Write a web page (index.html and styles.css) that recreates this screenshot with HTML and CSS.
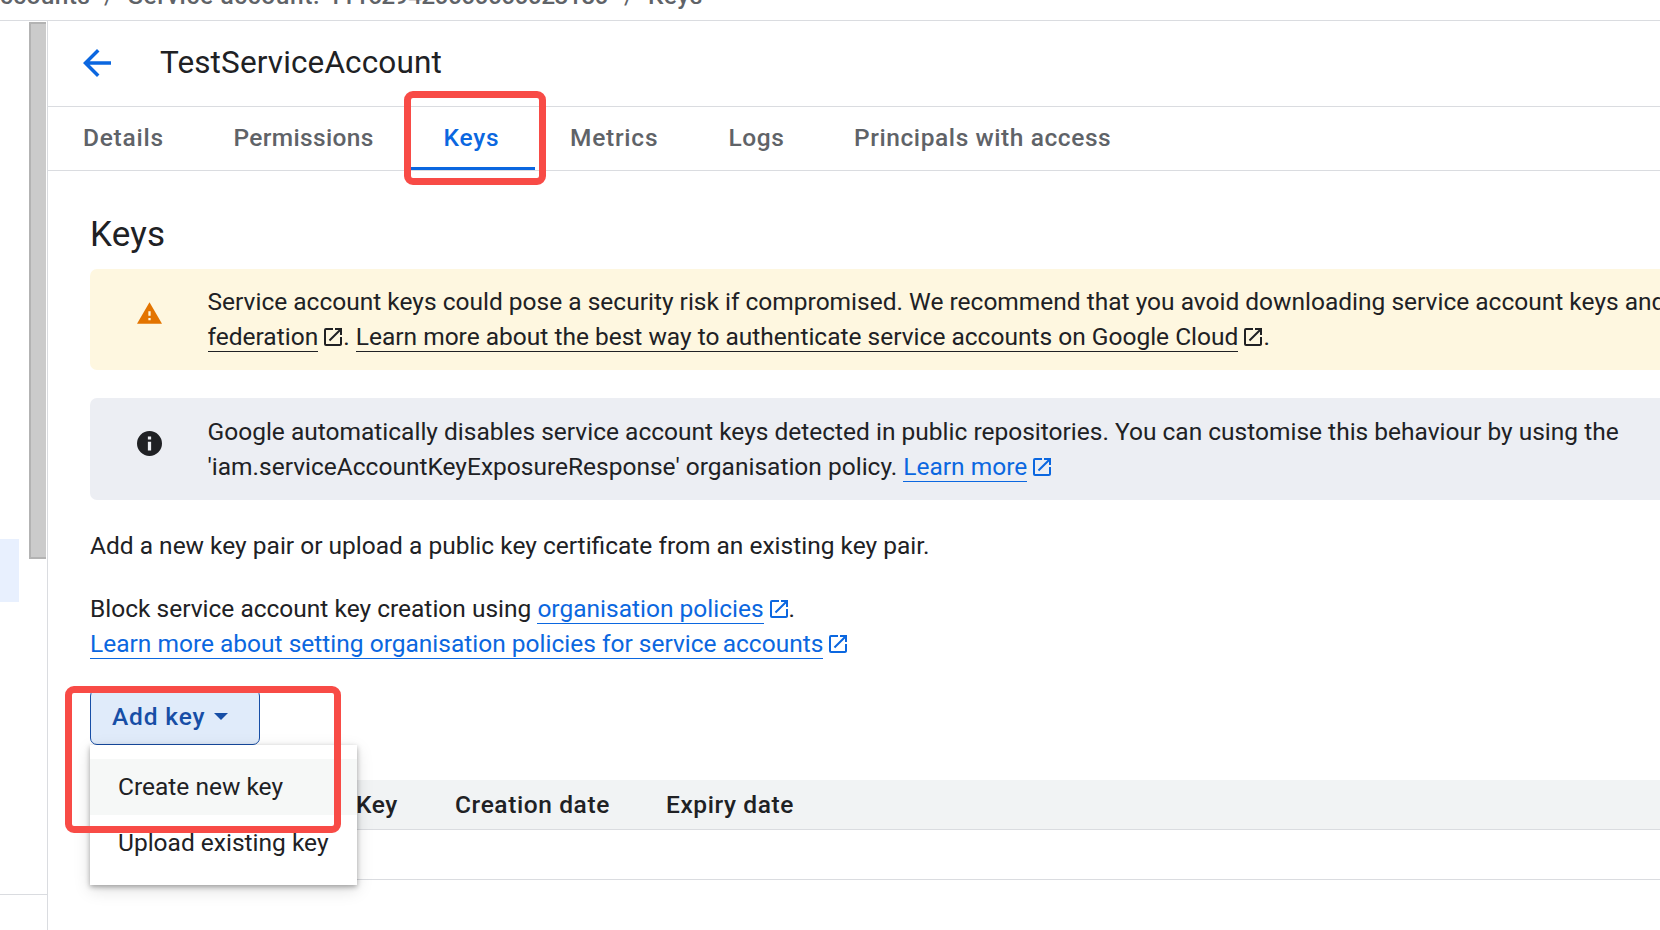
FILE: index.html
```html
<!DOCTYPE html>
<html lang="en">
<head>
<meta charset="utf-8">
<title>TestServiceAccount – Keys</title>
<link rel="stylesheet" href="styles.css">
</head>
<body>
<svg class="defs" aria-hidden="true">
  <symbol id="external" viewBox="3 3 18 18"><path d="M19 19H5V5h7V3H5a2 2 0 0 0-2 2v14a2 2 0 0 0 2 2h14c1.1 0 2-.9 2-2v-7h-2v7zM14 3v2h3.59l-9.83 9.83 1.41 1.41L19 6.41V10h2V3h-7z"/></symbol>
</svg>
<div class="page">
  <nav class="breadcrumb">
    <span class="crumb-parent">ccounts</span><span class="slash">/</span>
    <span class="crumb-account">Service account:</span><span class="crumb-id">111629420000000023180</span><span class="slash slash-last">/</span><span class="crumb-keys">Keys</span>
  </nav>
  <div class="body">
    <aside class="sidebar">
      <div class="side-list">
        <div class="side-selected"></div>
      </div>
      <div class="scroll-thumb"></div>
    </aside>
    <main class="main">
      <header class="title-bar">
        <svg class="back" viewBox="4 4 16 16"><path d="M20 11H7.83l5.59-5.59L12 4l-8 8 8 8 1.41-1.41L7.83 13H20v-2z"/></svg>
        <h1>TestServiceAccount</h1>
      </header>
      <div class="tabs">
        <a class="tab tab-details">Details</a>
        <a class="tab tab-permissions">Permissions</a>
        <a class="tab tab-keys active">Keys<span class="mark mark-tab"></span></a>
        <a class="tab tab-metrics">Metrics</a>
        <a class="tab tab-logs">Logs</a>
        <a class="tab tab-principals">Principals with access</a>
      </div>
      <section class="content">
        <h2>Keys</h2>
        <div class="banner warning">
          <svg class="status" viewBox="1 1 22 22"><path d="M1 21h22L12 2 1 21zm12-3h-2v-2h2v2zm0-4h-2v-4h2v4z"/></svg>
          <p>Service account keys could pose a security risk if compromised. We recommend that you avoid downloading service account keys and<br><a>federation</a><svg class="ext"><use href="#external"/></svg>. <a>Learn more about the best way to authenticate service accounts on Google Cloud</a><svg class="ext"><use href="#external"/></svg>.</p>
        </div>
        <div class="banner info">
          <svg class="status" viewBox="2 2 20 20"><path d="M12 2a10 10 0 1 0 0 20 10 10 0 0 0 0-20zm1.3 15.5h-2.6v-6.9h2.6v6.9zm0-8.7h-2.6V6.4h2.6v2.4z"/></svg>
          <p>Google automatically disables service account keys detected in public repositories. You can customise this behaviour by using the<br>'iam.serviceAccountKeyExposureResponse' organisation policy. <a class="link">Learn more</a><svg class="ext link"><use href="#external"/></svg></p>
        </div>
        <p class="intro">Add a new key pair or upload a public key certificate from an existing key pair.</p>
        <p class="policy">Block service account key creation using <a class="link">organisation policies</a><svg class="ext link"><use href="#external"/></svg>.<br><a class="link">Learn more about setting organisation policies for service accounts</a><svg class="ext link"><use href="#external"/></svg></p>
        <div class="add-key">
          <button class="add-button">Add key<span class="caret"></span></button>
          <div class="menu">
            <div class="menu-item hover">Create new key</div>
            <div class="menu-item">Upload existing key</div>
          </div>
          <span class="mark mark-add"></span>
        </div>
        <div class="table">
          <div class="row head"><span class="col-key">Key</span><span class="col-created">Creation date</span><span>Expiry date</span></div>
          <div class="row"></div>
        </div>
      </section>
    </main>
  </div>
</div>
</body>
</html>
```
FILE: styles.css
```css
* { box-sizing: border-box; }
body, h1, h2, p { margin: 0; }
body {
  font: 400 24.5px/35px Roboto, sans-serif;
  color: #202124;
  background: #fff;
  overflow: hidden;
}
.defs { display: none; }
.page { display: flex; flex-direction: column; height: 930px; overflow: hidden; }

.breadcrumb {
  display: flex;
  align-items: flex-end;
  height: 21px;
  padding-bottom: 7px;
  border-bottom: 1px solid #dadce0;
  font-weight: 500;
  line-height: 35px;
  color: #5f6368;
  white-space: nowrap;
  flex: none;
  overflow: hidden;
}
.crumb-parent { width: 104px; letter-spacing: .4px; }
.slash { width: 24px; font-weight: 400; }
.crumb-account { width: 200px; letter-spacing: .65px; }
.crumb-id { width: 296px; letter-spacing: -.6px; }
.crumb-keys { letter-spacing: .5px; }

.body { display: flex; flex: 1; min-height: 0; }
.sidebar {
  display: flex;
  align-items: flex-start;
  width: 48px;
  border-right: 1px solid #dadce0;
  flex: none;
  position: relative;
}
.sidebar::after {
  content: "";
  position: absolute;
  left: 0;
  right: 0;
  top: 873px;
  height: 1px;
  background: #dadce0;
}
.side-list { width: 29px; padding: 518px 10px 0 0; }
.side-selected { height: 63px; background: #e8f0fe; }
.scroll-thumb {
  width: 17px;
  height: 537px;
  margin-top: 1px;
  background: #cbcbcb;
  border: solid #b3b3b3;
  border-width: 2px 0 2px 2px;
}

.main { flex: 1; min-width: 0; overflow: hidden; }
.title-bar {
  display: flex;
  align-items: center;
  gap: 49px;
  height: 86px;
  padding: 0 0 2px 35px;
  border-bottom: 1px solid #dadce0;
}
.back { width: 28px; height: 28px; fill: #0b67e0; }
h1 { font-size: 31.5px; line-height: 42px; font-weight: 400; letter-spacing: .13px; }
.tabs { display: flex; height: 64px; border-bottom: 1px solid #dadce0; }
.tab {
  padding: 13px 0 0 35px;
  font-weight: 500;
  color: #5f6368;
  letter-spacing: .6px;
  white-space: nowrap;
}
.tab-details { width: 150.5px; letter-spacing: .75px; }
.tab-permissions { width: 210px; letter-spacing: .35px; }
.tab-keys { width: 126.5px; letter-spacing: .8px; }
.tab-metrics { width: 158.5px; letter-spacing: .75px; }
.tab-logs { width: 125.5px; }
.tab-principals { letter-spacing: .58px; }
.tab.active { position: relative; color: #0b67e0; border-bottom: 3px solid #0b67e0; }

.content { padding: 46px 0 0 42px; }
h2 { font-size: 35px; line-height: 35px; font-weight: 400; height: 52px; letter-spacing: .2px; }
.banner {
  display: flex;
  height: 101px;
  padding: 15px 0 0 47px;
  border-radius: 7px 0 0 7px;
  white-space: nowrap;
}
.warning { background: #fef7e0; }
.info { height: 102px; padding-top: 16px; margin-top: 28px; background: #eceef3; }
.status { width: 25px; height: 25px; margin: 17px 45.5px 0 0; fill: #202124; flex: none; }
.warning .status { fill: #e37400; }
.banner a { border-bottom: 1px solid #202124; }
.link, .banner .link { color: #0b67e0; border-color: #0b67e0; }
a.link { border-bottom: 1px solid; }
.ext { width: 18px; height: 18px; margin: 0 1px 0 6px; vertical-align: -1px; fill: #202124; }
.ext.link { fill: #0b67e0; }
.intro { margin-top: 28px; }
.policy { margin-top: 28px; }

.add-key { position: relative; width: 170px; margin-top: 28px; }
.add-button {
  display: flex;
  align-items: center;
  width: 170px;
  height: 56px;
  padding: 0 0 2px 21px;
  font: 500 24.5px/35px Roboto, sans-serif;
  letter-spacing: .85px;
  color: #174ea6;
  background: #e0ebfa;
  border: 1px solid #174ea6;
  border-radius: 7px;
}
.caret { margin-left: 9px; border: 7px solid transparent; border-top-color: #174ea6; border-bottom: 0; }
.menu {
  position: absolute;
  left: 0;
  top: 56px;
  width: 267px;
  height: 140px;
  padding-top: 14px;
  background: #fff;
  box-shadow: 0 2px 5px rgba(0,0,0,.32), 0 5px 16px rgba(0,0,0,.13);
  z-index: 1;
}
.menu-item { height: 56px; padding: 10px 28px; white-space: nowrap; }
.hover { background: #f6f8f7; }
.mark {
  position: absolute;
  border: 7px solid #f84b46;
  border-radius: 9px;
  z-index: 2;
}
.mark-tab { left: -5px; top: -16px; width: 142px; height: 94px; }
.mark-add { left: -25px; top: -3px; width: 276px; height: 147px; }

.table { margin-top: 35px; }
.row { height: 50px; border-bottom: 1px solid #dadce0; }
.head {
  display: flex;
  align-items: center;
  padding: 0 0 1px 266px;
  font-weight: 500;
  letter-spacing: .6px;
  background: #f1f3f4;
}
.col-key { width: 99px; }
.col-created { width: 211px; }
```
